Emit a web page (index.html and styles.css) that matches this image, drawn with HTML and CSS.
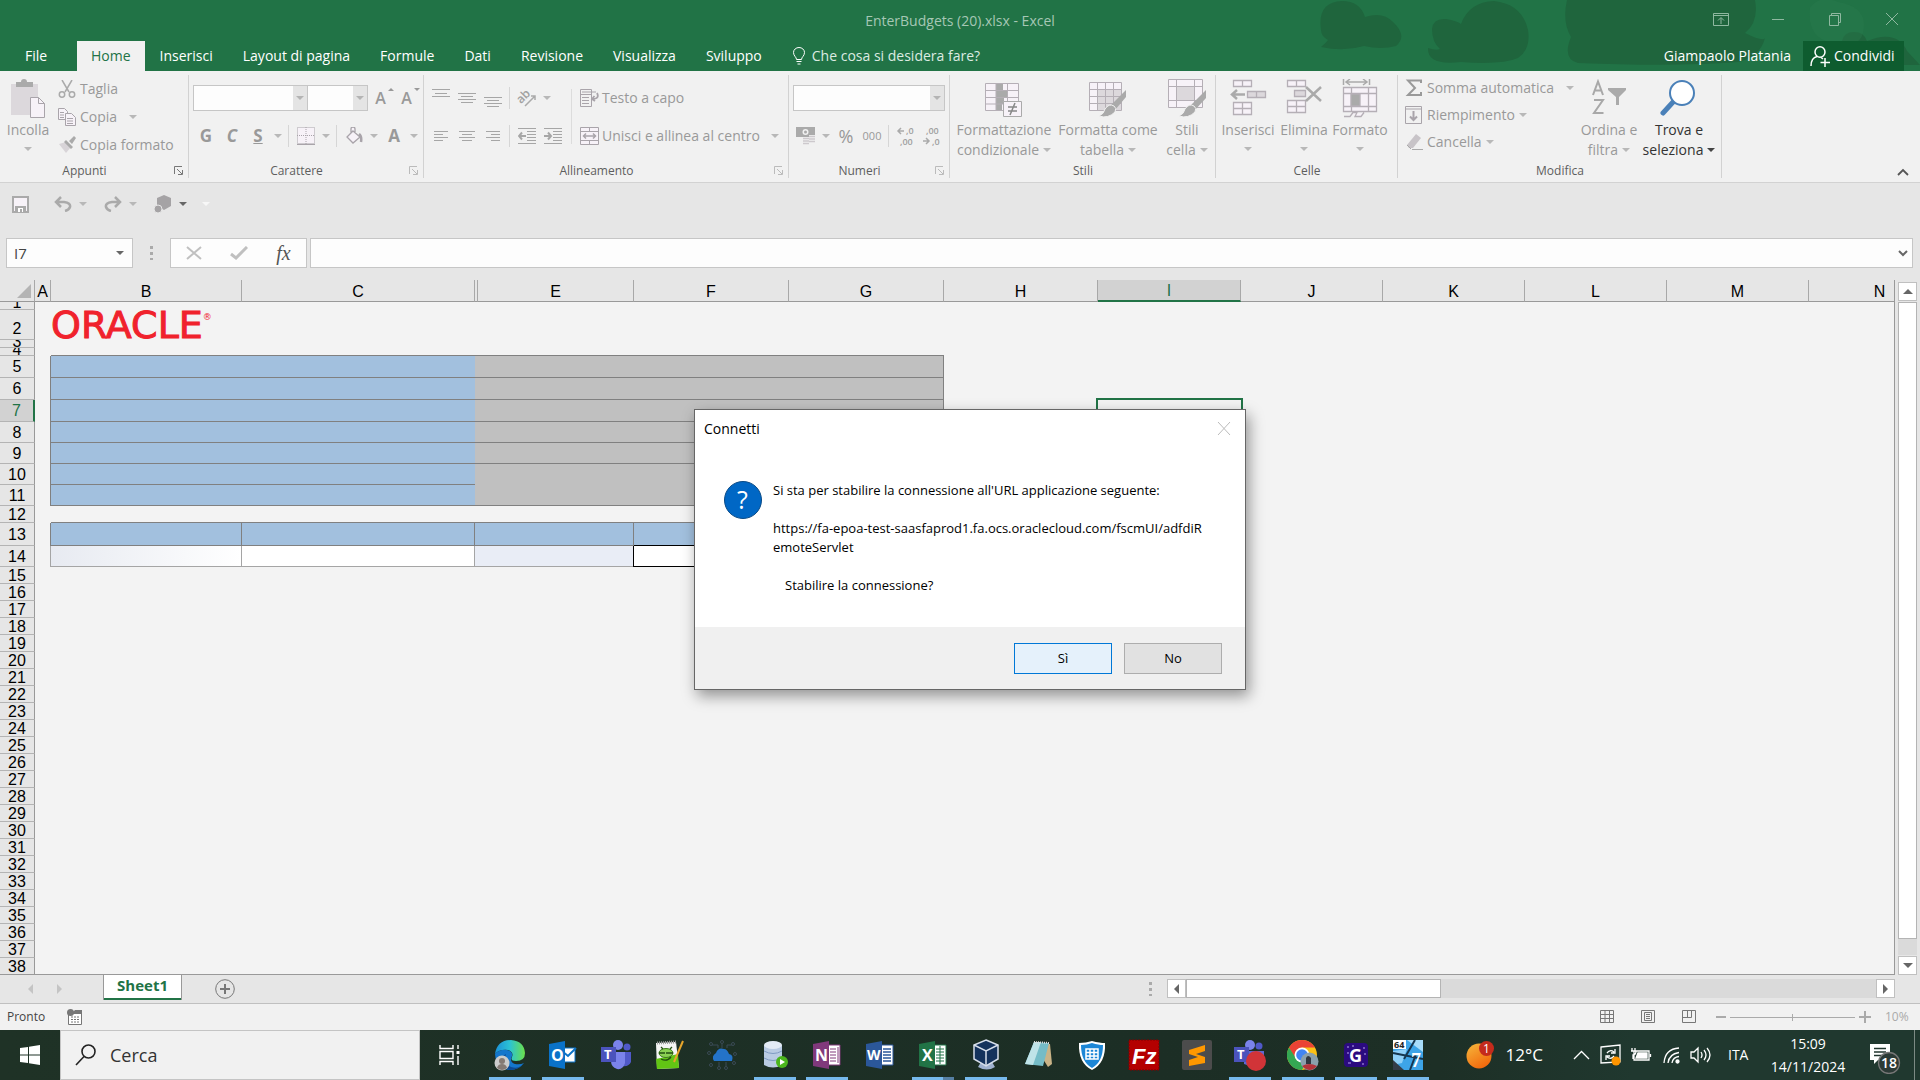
FILE: index.html
```html
<!DOCTYPE html>
<html lang="it">
<head>
<meta charset="utf-8">
<title>EnterBudgets (20).xlsx - Excel</title>
<link rel="stylesheet" href="styles.css">
</head>
<body>
<header class="top">
  <svg class="clouds" width="640" height="65" viewBox="0 0 640 65" aria-hidden="true"><path d="M41 30q-4-28 21-29 18 0 23 16 18-6 28 5 15 14 3 24-15 4-32 0-20 6-43 1 5-4 7-7-7-4-7-10ZM152 29q1-11 14-10 11 2 15 5 8-22 33-23 28 3 34 29 3 19-10 28-16 7-57 4-34 4-33-14 8 3 12 1-8-7-8-20ZM287 0h188q4 22-10 33 18 9 20 5-5 19-27 24-63 5-160 1-16-4-7-26-9-15-4-37ZM562 41q2-9 12-9t13 9q30-12 40 10l13 14h-89q13-12 11-24Z" fill="#1f653d"/><path d="M530 8q10-14 28-6 25 4 26 22 0 24-23 20-35-2-31-36Z" fill="#2a7b4e" opacity=".4"/></svg>
  <div class="titlebar">
    <h1>EnterBudgets (20).xlsx - Excel</h1>
    <div class="winbtns">
      <button aria-label="Opzioni barra multifunzione"><svg width="16" height="14" viewBox="0 0 16 14"><path d="M.5 1.500h15v12H.5zM.5 3.500h15M8 12V6M5 8.500l3-3 3 3"/></svg></button>
      <button aria-label="Riduci a icona"><svg width="16" height="14" viewBox="0 0 16 14"><path d="M2 7.500h12"/></svg></button>
      <button aria-label="Ripristina"><svg width="16" height="14" viewBox="0 0 16 14"><path d="M2.500 3.500h9v10h-9zM4.500 3V1.500h9v9H12"/></svg></button>
      <button aria-label="Chiudi"><svg width="16" height="14" viewBox="0 0 16 14"><path d="M2 1l12 12M14 1 2 13"/></svg></button>
    </div>
  </div>
  <nav class="tabs">
    <a class="file" href="#">File</a><a class="active" href="#">Home</a><a href="#">Inserisci</a><a href="#">Layout di pagina</a><a href="#">Formule</a><a href="#">Dati</a><a href="#">Revisione</a><a href="#">Visualizza</a><a href="#">Sviluppo</a>
    <a class="tell" href="#"><svg width="14" height="18" viewBox="0 0 14 18" fill="none" stroke="#fff"><path d="M4.500 12.500C4.500 10 1.500 9 1.500 5.500a5.500 5 0 0 1 11 0C12.500 9 9.500 10 9.500 12.500zM4.500 14.500h5M5.500 17h3"/></svg>Che cosa si desidera fare?</a>
    <span class="user">Giampaolo Platania</span>
    <button class="share"><svg width="20" height="21" viewBox="0 0 20 21" fill="none" stroke="#fff" stroke-width="1.500"><ellipse cx="10" cy="6" rx="5" ry="5.200"/><path d="M1 20q0-8 6-9.500M11 11.500l2 1.500M15 12v9M10.500 16.500H20"/></svg>Condividi</button>
  </nav>
</header>

<section class="ribbon">
  <div class="group g-clip">
    <div class="body">
      <button class="big"><svg width="36" height="40" viewBox="0 0 36 40"><path d="M1 5h27v31H1z" fill="#dcd8dc"/><path d="M6 3h5q0-3 3-3t3 3h6v5H6z" fill="#aaa"/><path d="M20.500 18.500h8l6 6v14h-14z" fill="#f7f2f8" stroke="#a9a4aa"/><path d="M28.500 18.500v6h6" fill="none" stroke="#a9a4aa"/></svg><span>Incolla</span><i class="dd"></i></button>
      <div class="stack r28">
        <button><svg width="18" height="18" viewBox="0 0 18 18" fill="none" stroke="#aaa" stroke-width="1.500"><path d="M4 0l7 12M14 0 7 12"/><circle cx="4" cy="14.500" r="2.700"/><circle cx="14" cy="14.500" r="2.700"/></svg>Taglia</button>
        <button><svg width="18" height="18" viewBox="0 0 18 18" fill="#f7f2f8" stroke="#a9a4aa"><path d="M.5.500h6l3 3v8h-9zM2 4.500h4M2 7h4M2 9.500h4"/><path d="M7.500 5.500h6l4 4v8h-10zM9 10.500h6M9 13h6M9 15.500h6"/></svg>Copia<i class="dd gap"></i></button>
        <button><svg width="18" height="18" viewBox="0 0 18 18"><path d="M1 8l7-2 5 5-5 6z" fill="#d8d4d8"/><path d="M8 4l7 7-2 2-7-7zM11 5l5-5 2 2-4 6z" fill="#aaa"/></svg>Copia formato</button>
      </div>
    </div>
    <footer>Appunti<svg class="launch on" viewBox="0 0 9 9"><path d="M.5 8V.500H8M3 3l5 5M8.500 4v4.500H4"/></svg></footer>
  </div>

  <div class="group g-font">
    <div class="body rows">
      <div class="row">
        <span class="combo c-font"><select aria-label="Tipo di carattere"><option></option></select></span><span class="combo c-size"><select aria-label="Dimensione"><option></option></select></span>
        <button class="i26 grow" aria-label="Aumenta dimensione">A<i class="mk up"></i></button>
        <button class="i26 grow" aria-label="Riduci dimensione">A<i class="mk down"></i></button>
      </div>
      <div class="row">
        <button class="i26 fmt b">G</button><button class="i26 fmt b it">C</button><button class="i26 fmt b un">S</button><button class="a14"><i class="dd"></i></button><i class="sep"></i>
        <button class="i26"><svg width="18" height="18" viewBox="0 0 18 18" fill="#f7f2f8" stroke="#a9a4aa"><path stroke-dasharray="1 1" d="M.5.500h17v16H.5zM9 0v17M0 8.500h18"/><path d="M0 17.500h18"/></svg></button><button class="a14"><i class="dd"></i></button><i class="sep"></i>
        <button class="i26"><svg width="18" height="18" viewBox="0 0 18 18" fill="#f7f2f8" stroke="#a9a4aa" stroke-width="1.300"><path d="M8 4l7 6-7 6-6-6zM6 7V2q0-2 2-2t2 2v4"/><path d="M14 7q3 2 2 8" stroke-width="2.500" fill="none"/></svg></button><button class="a14"><i class="dd"></i></button>
        <button class="i26 fmt b">A</button><button class="a14"><i class="dd"></i></button>
      </div>
    </div>
    <footer>Carattere<svg class="launch" viewBox="0 0 9 9"><path d="M.5 8V.500H8M3 3l5 5M8.500 4v4.500H4"/></svg></footer>
  </div>

  <div class="group g-align">
    <div class="body">
      <div class="rows pad">
        <div class="row">
          <button class="i26"><svg class="ln" viewBox="0 0 18 18"><path d="M0 .5h18M3 4.500h12M0 7.500h18"/></svg></button><button class="i26"><svg class="ln" viewBox="0 0 18 18"><path d="M0 4.500h18M3 7.500h12M0 10.500h18M3 13.500h12"/></svg></button><button class="i26"><svg class="ln" viewBox="0 0 18 18"><path d="M0 8.500h18M3 11.500h12M0 14.500h18M3 17.500h12"/></svg></button><i class="sep"></i>
          <button class="i26"><svg class="over" width="20" height="18" viewBox="0 0 20 18"><text x="0" y="12" class="t13" transform="rotate(-45 6 9)">ab</text><path d="M8 17L18 7M14 7h4v4" fill="none" stroke="#aaa" stroke-width="1.500"/></svg></button><button class="a14"><i class="dd"></i></button>
        </div>
        <div class="row">
          <button class="i26"><svg class="ln" viewBox="0 0 18 18"><path d="M2 4.500h14M2 7.500h9M2 10.500h14M2 13.500h9"/></svg></button><button class="i26"><svg class="ln" viewBox="0 0 18 18"><path d="M1 4.500h16M4 7.500h10M1 10.500h16M4 13.500h10"/></svg></button><button class="i26"><svg class="ln" viewBox="0 0 18 18"><path d="M2 4.500h14M7 7.500h9M2 10.500h14M7 13.500h9"/></svg></button><i class="sep"></i>
          <button class="i26"><svg class="ln" viewBox="0 0 18 18"><path d="M0 1.500h18M9 4.500h9M9 7.500h9M9 10.500h9M9 13.500h9M0 16.500h18"/><path d="M8 9H1M4 5.500L1 9l3 3.500" stroke-width="2"/></svg></button><button class="i26"><svg class="ln" viewBox="0 0 18 18"><path d="M0 1.500h18M9 4.500h9M9 7.500h9M9 10.500h9M9 13.500h9M0 16.500h18"/><path d="M0 9h7M4 5.500L7 9l-3 3.500" stroke-width="2"/></svg></button>
        </div>
      </div>
      <div class="rows wrapcol">
        <div class="row"><button class="lab"><svg width="19" height="18" viewBox="0 0 19 18" fill="none" stroke="#a9a4aa"><path d="M.5.500h11v17H.5zM0 5.500h12M2 3h14M2 8.500h7M2 11.500h7M2 14.500h7" /><path d="M17 4q3 6-5 6M14.500 7L12 10l3 2" stroke-width="1.800"/></svg>Testo a capo</button></div>
        <div class="row"><button class="lab"><svg width="19" height="18" viewBox="0 0 19 18" fill="#f7f2f8" stroke="#a9a4aa"><path d="M.5.500h18v17H.5zM0 4.500h19M0 13.500h19M9.500 0v4.500M9.500 13.500V18"/><path d="M3 9h13M6 6.500L3.500 9 6 11.500M13 6.500L15.500 9 13 11.500" fill="none" stroke-width="1.500"/></svg>Unisci e allinea al centro<i class="dd gap"></i></button></div>
      </div>
    </div>
    <footer>Allineamento<svg class="launch" viewBox="0 0 9 9"><path d="M.5 8V.500H8M3 3l5 5M8.500 4v4.500H4"/></svg></footer>
  </div>

  <div class="group g-num">
    <div class="body rows">
      <div class="row"><span class="combo c-num"><select aria-label="Formato numero"><option></option></select></span></div>
      <div class="row">
        <button class="i26"><svg width="20" height="19" viewBox="0 0 20 19"><path d="M0 0h19v10H0z" fill="#aaa"/><circle cx="9.500" cy="5" r="3" fill="#f1f1f1"/><circle cx="9.500" cy="5" r="1.500" fill="#aaa"/><path d="M7 10h6v9H7zM13 8h6v9h-6z" fill="#f1f1f1"/><path d="M7 11.500h6M7 14h6M7 16.500h6M13 9.500h6M13 12h6M13 14.500h6" stroke="#cdc9cd" stroke-width="1.500"/></svg></button><button class="a14"><i class="dd"></i></button>
        <button class="i26 pct">%</button><button class="i26 zero">000</button><i class="sep"></i>
        <button class="i26"><svg class="over" width="18" height="20" viewBox="0 0 18 20"><text x="9" y="8" class="t10">,0</text><text x="3" y="19" class="t10">,00</text><path d="M7 5H1M4 2L1 5l3 3" fill="none" stroke="#aaa" stroke-width="1.500"/></svg></button>
        <button class="i26"><svg class="over" width="18" height="20" viewBox="0 0 18 20"><text x="3" y="8" class="t10">,00</text><text x="9" y="19" class="t10">,0</text><path d="M0 15h6M3 12l3 3-3 3" fill="none" stroke="#aaa" stroke-width="1.500"/></svg></button>
      </div>
    </div>
    <footer>Numeri<svg class="launch" viewBox="0 0 9 9"><path d="M.5 8V.500H8M3 3l5 5M8.500 4v4.500H4"/></svg></footer>
  </div>

  <div class="group g-style">
    <div class="body">
      <button class="big"><svg width="38" height="40" viewBox="0 0 38 40"><path d="M.5 4.500h33v27H.5z" fill="#f7f2f8"/><path d="M11 4h7v7h-7zM11 11h12v7H11zM11 18h8v7h-8zM11 25h6v7h-6z" fill="#aaa"/><path d="M.5 4.500h33v27H.5zM11 4v28M22.500 4v28M0 11.500h34M0 18.500h34M0 25h34" fill="none" stroke="#b5afb6"/><path d="M18.500 22.500h18v15h-18z" fill="#f7f2f8" stroke="#aaa"/><path d="M23 28h9M23 32h9M30 24l-5 12" stroke="#888" stroke-width="1.500"/></svg><span>Formattazione<br>condizionale<i class="dd in"></i></span></button>
      <button class="big"><svg width="38" height="40" viewBox="0 0 38 40"><path d="M.5 3.500h32v28H.5z" fill="#f7f2f8"/><path d="M8 10h25v21H8z" fill="#dcd8dc"/><path d="M.5 3.500h32v28H.5zM8.500 3v28M16.500 3v28M24.500 3v28M0 10.500h33M0 17.500h33M0 24.500h33" fill="none" stroke="#b5afb6"/><path d="M37 11v7L26 31l-5-4z" fill="#aaa"/><path d="M25 27q3 2 1 6-7 7-16 4 5-2 6-7 4-6 9-3z" fill="#aaa" stroke="#f1f1f1"/></svg><span>Formatta come<br>tabella<i class="dd in"></i></span></button>
      <button class="big"><svg width="38" height="40" viewBox="0 0 38 40"><path d="M.5.500h34v28H.5z" fill="#f7f2f8"/><path d="M8 7h18v15H8z" fill="#dcd8dc"/><path d="M.5.500h34v28H.5zM8.500 0v28M26.500 0v28M0 7.500h35M0 21.500h35" fill="none" stroke="#b5afb6"/><path d="M38 11v8L27 31l-5-4z" fill="#aaa"/><path d="M26 27q3 2 1 6-7 7-16 4 5-2 6-7 4-6 9-3z" fill="#aaa" stroke="#f1f1f1"/></svg><span>Stili<br>cella<i class="dd in"></i></span></button>
    </div>
    <footer>Stili</footer>
  </div>

  <div class="group g-cell">
    <div class="body">
      <button class="big"><svg width="38" height="40" viewBox="0 0 38 40" fill="#f7f2f8" stroke="#b5afb6" stroke-width="1.300"><path d="M4.500 1.500h18v6h-18zM13.500 1v7M4.500 23.500h18v12h-18zM13.500 23v13M4 29.500h19"/><path d="M18.500 12.500h18v6h-18zM27.500 12v7" fill="#dcd8dc"/><path d="M16 15.500H3M8 11l-5 4.500L8 20" fill="none" stroke="#aaa" stroke-width="2.500"/></svg><span>Inserisci</span><i class="dd"></i></button>
      <button class="big"><svg width="38" height="40" viewBox="0 0 38 40" fill="#f7f2f8" stroke="#b5afb6" stroke-width="1.300"><path d="M2.500 1.500h18v6h-18zM11.500 1v7M2.500 21.500h18v12h-18zM11.500 21v13M2 27.500h19"/><path d="M9.500 11.500h11v6h-11z" fill="#dcd8dc"/><path d="M21 8l15 14M36 8L21 22" fill="none" stroke="#aaa" stroke-width="2.500"/></svg><span>Elimina</span><i class="dd"></i></button>
      <button class="big"><svg width="38" height="40" viewBox="0 0 38 40" fill="#f7f2f8" stroke="#b5afb6" stroke-width="1.300"><path d="M2.500 8.500h33v24h-33zM10.500 8v24M27.500 8v24M2 14.500h33M2 27.500h33M3 37.500h6l3-4h4l-2 4h6l3-4"/><path d="M10 15h9v12h-9z" fill="#aaa"/><path d="M2.500 0v6M28.500 0v6M5 3h21M9 0L5 3l4 3M22 0l4 3-4 3" fill="none" stroke="#aaa" stroke-width="1.500"/></svg><span>Formato</span><i class="dd"></i></button>
    </div>
    <footer>Celle</footer>
  </div>

  <div class="group g-edit">
    <div class="body">
      <div class="stack r27">
        <button><svg width="18" height="18" viewBox="0 0 18 18"><path d="M16 4V1.500H3L10 9l-7 7h13V13" fill="none" stroke="#999" stroke-width="2"/></svg>Somma automatica<i class="dd gap"></i></button>
        <button><svg width="18" height="18" viewBox="0 0 18 18" fill="none" stroke="#a9a4aa"><path d="M.5.500h16v17H.5zM0 3h17" /><path d="M8.500 5v9M5 10.500l3.500 3.500 3.500-3.500" stroke-width="2"/></svg>Riempimento<i class="dd"></i></button>
        <button><svg width="18" height="18" viewBox="0 0 18 18"><path d="M2 12L11 1l5 4-8 10H4z" fill="#c8c4c8"/><path d="M2 12l4 4M7 16.500h11" stroke="#aaa"/></svg>Cancella<i class="dd"></i></button>
      </div>
      <button class="big"><svg width="38" height="40" viewBox="0 0 38 40"><g fill="none" stroke="#a8a8a8" stroke-width="2"><path d="M3 16L8 2.500 13 16M5 11.500h6M4 21h9L4 34h9.500"/></g><path d="M18 9h18v2l-7 7v8h-3v-8l-8-7z" fill="#aaa"/></svg><span>Ordina e<br>filtra<i class="dd in"></i></span></button>
      <button class="big dark"><svg width="38" height="40" viewBox="0 0 38 40"><path d="M14 22L3 34" stroke="#4a80b8" stroke-width="5" stroke-linecap="round"/><circle cx="22" cy="14" r="12" fill="#fff" stroke="#4a80b8" stroke-width="2"/></svg><span>Trova e<br>seleziona<i class="dd in"></i></span></button>
    </div>
    <footer>Modifica</footer>
  </div>
  <button class="collapse" aria-label="Comprimi"><svg width="12" height="8" viewBox="0 0 12 8"><path d="M1 7l5-5 5 5" fill="none" stroke="#555" stroke-width="1.800"/></svg></button>
</section>

<section class="quick">
  <button class="q40"><svg width="17" height="17" viewBox="0 0 17 17"><path d="M1 1h15v15H1z" fill="#f7f2f8" stroke="#aaa" stroke-width="2"/><path d="M3 10h11v6H3z" fill="#aaa"/><path d="M6 12h5v4H6z" fill="#fff"/><path d="M8 13h2v3H8z" fill="#aaa"/></svg></button>
  <button class="q40 end"><svg width="18" height="16" viewBox="0 0 18 16" fill="none" stroke="#aaa" stroke-width="2.500"><path d="M7 1L2 6l5 5M2 6h8q7 1 6 5-1 3-5 4"/></svg></button><button class="a14"><i class="dd"></i></button>
  <button class="q40 next"><svg width="18" height="16" viewBox="0 0 18 16" fill="none" stroke="#aaa" stroke-width="2.500"><path d="M11 1l5 5-5 5M16 6H8Q1 7 2 11q1 3 5 4"/></svg></button><button class="a14"><i class="dd"></i></button>
  <button class="q40 next"><svg width="18" height="18" viewBox="0 0 18 18" fill="#a5a3a5"><path d="M10 0l7 3v8l-7 4-7-4V3z"/><circle cx="4" cy="14" r="4" stroke="#e6e6e6"/></svg></button><button class="a14"><i class="dd blk"></i></button><i class="dd faint"></i>
</section>

<section class="formula">
  <div class="namebox"><input value="I7" aria-label="Casella nome"><button aria-label="Apri elenco nomi"><i class="dd blk"></i></button></div>
  <i class="dots"></i>
  <div class="fxbox">
    <button aria-label="Annulla"><svg width="16" height="14" viewBox="0 0 16 14"><path d="M1 1l14 12M15 1L1 13" stroke="#c0c0c0" stroke-width="2"/></svg></button>
    <button aria-label="Invio"><svg width="18" height="14" viewBox="0 0 18 14"><path d="M1 8l5 4L17 1" fill="none" stroke="#c0c0c0" stroke-width="3"/></svg></button>
    <button class="fx" aria-label="Inserisci funzione">fx</button>
  </div>
  <div class="fbar"><input aria-label="Barra della formula"><button aria-label="Espandi"><svg width="10" height="7" viewBox="0 0 10 7"><path d="M1 1l4 4 4-4" fill="none" stroke="#666" stroke-width="2"/></svg></button></div>
</section>

<main class="work">
  <div class="sheet">
    <table>
      <colgroup><col class="w35"><col class="w16"><col class="w191"><col class="w233"><col class="w3"><col class="w156"><col class="w155"><col class="w155"><col class="w154"><col class="w143"><col class="w142"><col class="w142"><col class="w142"><col class="w142"><col class="w142"></colgroup>
      <thead><tr><th class="corner"><svg width="14" height="14" viewBox="0 0 14 14"><path d="M14 0v14H0z" fill="#b4b4b4"/></svg></th><th>A</th><th>B</th><th>C</th><th></th><th>E</th><th>F</th><th>G</th><th>H</th><th class="sel">I</th><th>J</th><th>K</th><th>L</th><th>M</th><th>N</th></tr></thead>
      <tbody>
        <tr class="h8"><th><div>1</div></th><td colspan="14"></td></tr>
        <tr class="h30"><th><div>2</div></th><td></td><td colspan="13"><div class="oracle">ORACLE<sup>®</sup></div></td></tr>
        <tr class="h8 cut"><th><div>3</div></th><td colspan="14"></td></tr>
        <tr class="h8 cut edge"><th><div>4</div></th><td class="last"></td><td colspan="6" class="bb"></td><td colspan="7"></td></tr>
        <tr class="h22"><th><div>5</div></th><td class="br"></td><td colspan="2" class="blue"></td><td colspan="4" class="gray"></td><td colspan="7"></td></tr>
        <tr class="h22"><th><div>6</div></th><td class="br"></td><td colspan="2" class="blue"></td><td colspan="4" class="gray"></td><td colspan="7"></td></tr>
        <tr class="h22"><th class="sel"><div>7</div></th><td class="br"></td><td colspan="2" class="blue"></td><td colspan="4" class="gray"></td><td></td><td class="cursor"></td><td colspan="5"></td></tr>
        <tr class="h21"><th><div>8</div></th><td class="br"></td><td colspan="2" class="blue"></td><td colspan="4" class="gray"></td><td colspan="7"></td></tr>
        <tr class="h21"><th><div>9</div></th><td class="br"></td><td colspan="2" class="blue"></td><td colspan="4" class="gray"></td><td colspan="7"></td></tr>
        <tr class="h21"><th><div>10</div></th><td class="br"></td><td colspan="2" class="blue"></td><td colspan="4" class="gray" rowspan="2"></td><td colspan="7"></td></tr>
        <tr class="h21"><th><div>11</div></th><td class="br"></td><td colspan="2" class="blue"></td><td colspan="7"></td></tr>
        <tr class="h17"><th><div>12</div></th><td></td><td colspan="6" class="bb"></td><td colspan="7"></td></tr>
        <tr class="h23"><th><div>13</div></th><td class="br"></td><td class="blue br"></td><td class="blue br"></td><td colspan="2" class="blue br"></td><td class="blue br bk"></td><td class="blue br"></td><td colspan="7"></td></tr>
        <tr class="h21 entry"><th><div>14</div></th><td class="br"></td><td class="fade"></td><td class="white"></td><td colspan="2" class="pale"></td><td class="active"></td><td class="white"></td><td colspan="7"></td></tr>
        <tr><th><div>15</div></th><td colspan="14"></td></tr>
        <tr><th><div>16</div></th><td colspan="14"></td></tr>
        <tr><th><div>17</div></th><td colspan="14"></td></tr>
        <tr><th><div>18</div></th><td colspan="14"></td></tr>
        <tr><th><div>19</div></th><td colspan="14"></td></tr>
        <tr><th><div>20</div></th><td colspan="14"></td></tr>
        <tr><th><div>21</div></th><td colspan="14"></td></tr>
        <tr><th><div>22</div></th><td colspan="14"></td></tr>
        <tr><th><div>23</div></th><td colspan="14"></td></tr>
        <tr><th><div>24</div></th><td colspan="14"></td></tr>
        <tr><th><div>25</div></th><td colspan="14"></td></tr>
        <tr><th><div>26</div></th><td colspan="14"></td></tr>
        <tr><th><div>27</div></th><td colspan="14"></td></tr>
        <tr><th><div>28</div></th><td colspan="14"></td></tr>
        <tr><th><div>29</div></th><td colspan="14"></td></tr>
        <tr><th><div>30</div></th><td colspan="14"></td></tr>
        <tr><th><div>31</div></th><td colspan="14"></td></tr>
        <tr><th><div>32</div></th><td colspan="14"></td></tr>
        <tr><th><div>33</div></th><td colspan="14"></td></tr>
        <tr><th><div>34</div></th><td colspan="14"></td></tr>
        <tr><th><div>35</div></th><td colspan="14"></td></tr>
        <tr><th><div>36</div></th><td colspan="14"></td></tr>
        <tr><th><div>37</div></th><td colspan="14"></td></tr>
        <tr><th><div>38</div></th><td colspan="14"></td></tr>
      </tbody>
    </table>
  </div>
  <div class="vscroll"><button aria-label="Su"><i class="tri up"></i></button><div class="track"><div class="thumb"></div></div><button aria-label="Giù"><i class="tri down"></i></button></div>
</main>

<section class="sheetbar">
  <button class="nav" aria-label="Precedente"><i class="tri left dim"></i></button><button class="nav" aria-label="Successivo"><i class="tri right dim"></i></button>
  <a class="stab" href="#">Sheet1</a>
  <button class="add" aria-label="Nuovo foglio"><svg width="20" height="20" viewBox="0 0 20 20" fill="none" stroke="#777"><circle cx="10" cy="10" r="9.300"/><path d="M10 5v10M5 10h10" stroke-width="2"/></svg></button>
  <i class="dots"></i>
  <div class="hscroll"><button aria-label="Sinistra"><i class="tri left"></i></button><div class="track"><div class="thumb"></div></div><button aria-label="Destra"><i class="tri right"></i></button></div>
</section>

<section class="status">
  <span>Pronto</span>
  <svg width="16" height="16" viewBox="0 0 16 16"><path d="M1.500 3.500h13v12h-13z" fill="#fff" stroke="#777"/><path d="M8 1h7v4H4z" fill="#777"/><path d="M4 8h9M4 10.500h9M4 13h9" stroke="#777" stroke-dasharray="2 1"/><circle cx="3.500" cy="3.500" r="3.500" fill="#777"/></svg>
  <div class="views">
    <button aria-label="Normale"><svg width="14" height="14" viewBox="0 0 14 14"><path d="M.5.500h13v12H.5zM5 0v13M9.500 0v13M0 4.500h14M0 8.500h14"/></svg></button>
    <button aria-label="Layout di pagina"><svg width="14" height="14" viewBox="0 0 14 14"><path d="M.5.500h13v12H.5zM3.500 2.500h7v8h-7zM5 4.500h4M5 6.500h4M5 8.500h4"/></svg></button>
    <button aria-label="Anteprima interruzioni"><svg width="14" height="14" viewBox="0 0 14 14"><path d="M.5.500h13v12H.5zM5.500 0v7.500M9.500 0v7.500M0 7.500h9.500"/></svg></button>
  </div>
  <div class="zoom"><button aria-label="Riduci"><svg width="10" height="12" viewBox="0 0 10 12"><path d="M0 6h10" stroke="#aaa" stroke-width="2"/></svg></button><input type="range" aria-label="Zoom"><button aria-label="Ingrandisci"><svg width="12" height="12" viewBox="0 0 12 12"><path d="M0 6h12M6 0v12" stroke="#aaa" stroke-width="2"/></svg></button><span>10%</span></div>
</section>

<footer class="taskbar">
  <button class="start" aria-label="Start"><svg width="20" height="20" viewBox="0 0 20 20" fill="#fff"><path d="M0 3l8-1v7.500H0zM9 1.800L20 0v9.500H9zM0 10.500h8V18l-8-1zM9 10.500h11V20L9 18.200z"/></svg></button>
  <label class="search"><svg width="22" height="22" viewBox="0 0 22 22" fill="none" stroke="#222" stroke-width="1.600"><circle cx="13.500" cy="7.500" r="6.500"/><path d="M9 12.500L1 21"/></svg><input placeholder="Cerca" aria-label="Cerca"></label>
  <button class="tview" aria-label="Visualizzazione attività"><svg width="22" height="20" viewBox="0 0 22 20" fill="none" stroke="#fff" stroke-width="1.400"><path d="M1 0v3.500h13V0M1 6.500h13v7H1zM1 20v-3.500h13V20M19 0v4M19 11v9"/><path d="M17.500 6h3v3h-3z" fill="#fff" stroke="none"/></svg></button>
  <div class="apps">
    <button class="run" aria-label="Edge"><svg width="32" height="32" viewBox="0 0 32 32"><defs><linearGradient id="eg"><stop stop-color="#1a8fd8"/><stop offset=".5" stop-color="#2cc3d2"/><stop offset="1" stop-color="#6be04a"/></linearGradient></defs><path d="M1 15Q3 1 17 1q13 1 14 13 0 8-9 8-6 0-4-4 2-5-4-7-8-1-13 4z" fill="url(#eg)"/><path d="M1 15q5-5 12-4 6 1 5 6-3 6 3 8 5 1 9-1-5 7-14 7Q2 30 1 15z" fill="#1476cc"/><path d="M12 15q-3 9 5 13 6 2 10-1l3-3q-5 7-14 7-9-2-9-9 1-5 5-7z" fill="#0d4a94"/><circle cx="8" cy="24" r="7.500" fill="#ccc"/><circle cx="8" cy="22" r="3" fill="#857a74"/><path d="M3 29q1-4 5-4t5 4q-5 4-10 0z" fill="#857a74"/></svg></button>
    <button class="run" aria-label="Outlook"><svg width="32" height="32" viewBox="0 0 32 32"><path d="M15 9h13v14H15z" fill="#fff" stroke="#0a72c8"/><path d="M15 12l6 5 8-8" fill="none" stroke="#0a72c8" stroke-width="2"/><path d="M2 5l16-3v28L2 27z" fill="#0a72c8"/><text x="4" y="22" class="w16t">O</text></svg></button>
    <button aria-label="Teams"><svg width="32" height="32" viewBox="0 0 32 32"><circle cx="18" cy="6" r="5" fill="#7b83eb"/><circle cx="27" cy="8" r="3.500" fill="#5059c9"/><path d="M22 13h9v10q-2 5-9 4z" fill="#5059c9"/><path d="M11 13h14v11q-2 7-8 6-6-2-6-8z" fill="#7b83eb"/><path d="M1 8h15v15H1z" fill="#4b53bc"/><text x="4" y="20" class="w12t">T</text></svg></button>
    <button aria-label="Notepad++"><svg width="32" height="32" viewBox="0 0 32 32"><path d="M3 4l20-1 3 26-22 1z" fill="#f5f5f5"/><path d="M3 20l22-5 1 14-22 1z" fill="#62c514"/><path d="M4 4l19-1" stroke="#999" stroke-width="3" stroke-dasharray="1 1"/><ellipse cx="13" cy="14" rx="7" ry="4.500" fill="#8ad053" stroke="#3d7a1c"/><path d="M6 14h6M13 14h7M8 20q6 3 10-2M10 10l-2-2M17 10l2-2" fill="none" stroke="#234d12" stroke-width="1.300"/><path d="M30 2L21 23" stroke="#e6a52b" stroke-width="2"/></svg></button>
    <button aria-label="Cloud"><svg width="32" height="32" viewBox="0 0 32 32"><g fill="none" stroke="#3a4a55"><circle cx="5" cy="5" r="1.500"/><circle cx="16" cy="3" r="1.500"/><circle cx="27" cy="5" r="1.500"/><circle cx="3" cy="14" r="1.500"/><circle cx="29" cy="15" r="1.500"/><circle cx="5" cy="26" r="1.500"/><circle cx="13" cy="29" r="1.500"/><circle cx="20" cy="29" r="1.500"/><circle cx="28" cy="24" r="1.500"/><path d="M6 6h6v3M16 5v4M26 6h-5v3M13 23v4M20 23v4"/></g><path d="M8 22q-3-5 2-8 2-6 8-4 3 0 5 5 5 1 3 7z" fill="#2473c8"/></svg></button>
    <button class="run" aria-label="SQL Developer"><svg width="32" height="32" viewBox="0 0 32 32"><path d="M5 6v20q9 5 18 0V6z" fill="#b9cbe3"/><ellipse cx="14" cy="6" rx="9" ry="4" fill="#e3ebf5"/><path d="M5 12q9 5 18 0M5 19q9 5 18 0" fill="none" stroke="#7f9bc2"/><circle cx="23" cy="23" r="6" fill="#4bb51d"/><path d="M21 20l5 3-5 3z" fill="#fff"/></svg></button>
    <button class="run" aria-label="OneNote"><svg width="32" height="32" viewBox="0 0 32 32"><path d="M16 6h13v20H16z" fill="#fff" stroke="#80397b"/><path d="M19 10h6M19 13h6M19 16h6M19 19h6M19 22h6M27 8v16" stroke="#80397b"/><path d="M2 5l16-3v28L2 27z" fill="#80397b"/><text x="4" y="22" class="w16t">N</text></svg></button>
    <button aria-label="Word"><svg width="32" height="32" viewBox="0 0 32 32"><path d="M16 6h13v20H16z" fill="#fff" stroke="#2b579a"/><path d="M19 10h8M19 13h8M19 16h8M19 19h8M19 22h8" stroke="#2b579a" stroke-width="1.500"/><path d="M2 5l16-3v28L2 27z" fill="#2b579a"/><text x="3" y="21" class="w14t">W</text></svg></button>
    <button class="run two" aria-label="Excel"><svg width="32" height="32" viewBox="0 0 32 32"><path d="M16 6h13v20H16z" fill="#fff" stroke="#217346"/><path d="M19 10h8M19 13h8M19 16h8M19 19h8M19 22h8M23 7v18" stroke="#217346"/><path d="M2 5l16-3v28L2 27z" fill="#217346"/><text x="5" y="22" class="w16t">X</text></svg></button>
    <button class="run" aria-label="VirtualBox"><svg width="32" height="32" viewBox="0 0 32 32"><path d="M11 23h11l3 5q-8 5-17 0z" fill="#9fb1cf"/><path d="M16 1l12 5v14l-12 7-12-7V6z" fill="#14325c" stroke="#d6deea" stroke-width="1.500"/><path d="M4 6l12 6 12-6M16 12v15" fill="none" stroke="#d6deea" stroke-width="1.500"/></svg></button>
    <button aria-label="Blocco note"><svg width="32" height="32" viewBox="0 0 32 32"><path d="M10 4l17 1 2 20-4 3z" fill="#c9b387"/><path d="M11 3l15 1-6 23L2 25z" fill="#75bcc7"/><path d="M11 3l7 0-8 23-8-1z" fill="#bfe3e8"/><path d="M11 3l15 1" stroke="#ddd" stroke-width="2" stroke-dasharray="1 1"/></svg></button>
    <button aria-label="FortiClient"><svg width="32" height="32" viewBox="0 0 32 32"><path d="M16 2q8 2 13 2 1 20-13 27Q2 24 3 4q7 0 13-2z" fill="#fff"/><path d="M16 4q7 2 11 2 0 17-11 23Q5 23 5 6q6 0 11-2z" fill="#1c86d6"/><path d="M10 10h12v10H10zM10 13.500h12M10 17h12M14 10v10M18 10v10" fill="none" stroke="#fff" stroke-width="1.500"/></svg></button>
    <button aria-label="FileZilla"><svg width="32" height="32" viewBox="0 0 32 32"><path d="M1 1h30v30H1z" fill="#b40000" stroke="#7c0000" stroke-dasharray="2 1"/><text x="4" y="25" class="fz">Fz</text></svg></button>
    <button aria-label="Sublime Text"><svg width="32" height="32" viewBox="0 0 32 32"><rect x="1" y="1" width="30" height="30" rx="2" fill="#4c4c4c"/><path d="M8 11l16-5v6l-9 3 9 3v6L8 27v-6l9-3-9-3z" fill="#ff9800"/></svg></button>
    <button class="run" aria-label="Teams riunione"><svg width="34" height="34" viewBox="0 0 34 34"><circle cx="17" cy="7" r="5" fill="#7b83eb"/><circle cx="26" cy="8" r="3.500" fill="#5059c9"/><path d="M11 13h20v9l-8 8-12-4z" fill="#5f67d2"/><path d="M1 9h15v15H1z" fill="#4b53bc"/><text x="4" y="21" class="w12t">T</text><circle cx="23" cy="23" r="10" fill="#d13438"/></svg></button>
    <button class="run" aria-label="Chrome"><svg width="32" height="32" viewBox="0 0 32 32"><circle cx="15" cy="16" r="15" fill="#fbc116"/><path d="M2 8.500A15 15 0 0 1 28 8.500H15l-7 11z" fill="#ea4335"/><path d="M2 8.500A15 15 0 0 0 15 31l7-12-12 2z" fill="#34a853"/><circle cx="15" cy="16" r="7.500" fill="#fff"/><circle cx="15" cy="16" r="5.800" fill="#4285f4"/><circle cx="22.500" cy="22.500" r="9" fill="#8aa0ad"/><path d="M19 19q2-4 5 0v6h-5z" fill="#303740"/><path d="M15 27q7-4 15 0-7 8-15 0z" fill="#b4333a"/></svg></button>
    <button class="run" aria-label="Greenshot"><svg width="32" height="32" viewBox="0 0 32 32"><rect x="4" y="4" width="24" height="24" rx="4" fill="#2b0a80"/><path d="M7 8h2M12 7h2M7 14h2M23 9h2M24 15h2M8 24h3M22 25h2" stroke="#b9a4f0" stroke-width="1"/><text x="9" y="23" class="w18t">G</text></svg></button>
    <button class="run" aria-label="Applicazione 64 bit"><svg width="32" height="32" viewBox="0 0 32 32"><path d="M1 1h30v30H1z" fill="#3da4e8"/><path d="M15 1h16v12z" fill="#a8dcfa"/><path d="M1 12l14-2-5 14-9 2z" fill="#8fd0f8"/><path d="M12 20L23 1M1 14l30 6M18 31l6-16" stroke="#17364f" stroke-width="2"/><path d="M1 21l11 10H1z" fill="#343c48"/><path d="M1 1h13v9H1z" fill="#fff"/><text x="2" y="9" class="n64">64</text><text x="19" y="28" class="n7">7</text></svg></button>
  </div>
  <div class="tray">
    <button class="weather"><svg width="28" height="28" viewBox="0 0 28 28"><defs><linearGradient id="sun" x2="0.600" y2="1"><stop stop-color="#f5b83c"/><stop offset="1" stop-color="#f2690d"/></linearGradient></defs><circle cx="13" cy="15" r="12.500" fill="url(#sun)"/><circle cx="20.500" cy="7.500" r="7.500" fill="#c42b1c"/><text x="17" y="12" class="n1">1</text></svg>12°C</button>
    <button class="t30" aria-label="Icone nascoste"><svg width="17" height="10" viewBox="0 0 17 10"><path d="M1 9l7.500-7.500L16 9"/></svg></button>
    <button class="t30" aria-label="Aggiornamenti"><svg width="22" height="22" viewBox="0 0 22 22"><path d="M1 3l19-2v17L1 19zM7 9q3-4 7-1M15 5v4h-4M14 12q-3 4-7 1M6 16v-4h4"/><circle cx="16" cy="17" r="4.500" fill="#ff9500" stroke="none"/></svg></button>
    <button class="t30" aria-label="Batteria"><svg width="22" height="16" viewBox="0 0 22 16"><path d="M4 4h15v9H4zM20.500 7v3M2 1v3M5 1v3M1 4h5q0 4-3 4v4"/><path d="M8 6h9v5H6z" fill="#fff"/></svg></button>
    <button class="t30" aria-label="Wi-Fi"><svg width="18" height="18" viewBox="0 0 18 18"><path d="M2 17Q3 3 17 2M6 17Q7 8 17 6.500M10 17q1-6 7-6.500"/><circle cx="15.500" cy="15.500" r="1.500" fill="#fff"/></svg></button>
    <button class="t30" aria-label="Volume"><svg width="22" height="18" viewBox="0 0 22 18"><path d="M1 6h3l4-4v14l-4-4H1zM11 6q2 3 0 6M14 4q4 5 0 10M17 2q6 7 0 14"/></svg></button>
    <span class="lang">ITA</span>
    <span class="clock">15:09<br>14/11/2024</span>
    <button class="notif" aria-label="Notifiche"><svg width="32" height="32" viewBox="0 0 32 32"><path d="M1 2h20v16H9l-4 4v-4H1z" fill="#fff" stroke="none"/><path d="M5 6.500h12M5 10h12M5 13.500h8" stroke="#20352e" stroke-width="1.500"/><circle cx="20" cy="21" r="10.500" fill="#2c3a36" stroke="#777"/><text x="12" y="26" class="n18">18</text></svg></button>
    <i class="peek"></i>
  </div>
</footer>

<div class="dialog" role="dialog" aria-labelledby="dlg">
  <div class="dtitle"><h2 id="dlg">Connetti</h2><button aria-label="Chiudi"><svg width="14" height="13" viewBox="0 0 14 13"><path d="M1 0l12 13M13 0L1 13" stroke="#bbb"/></svg></button></div>
  <div class="dbody">
    <svg width="38" height="38" viewBox="0 0 38 38"><circle cx="19" cy="19" r="18.500" fill="#0067c5" stroke="#094a86"/><text x="13" y="28" class="qm">?</text></svg>
    <div class="msg"><p>Si sta per stabilire la connessione all'URL applicazione seguente:</p><p>https://fa-epoa-test-saasfaprod1.fa.ocs.oraclecloud.com/fscmUI/adfdiR<br>emoteServlet</p><p class="ind">Stabilire la connessione?</p></div>
  </div>
  <div class="dfoot"><button class="yes">Sì</button><button>No</button></div>
</div>
</body>
</html>
```
FILE: styles.css
```css
* { box-sizing: border-box; }
body { margin: 0; min-height: 100vh; display: flex; flex-direction: column; overflow: hidden; background: #e6e6e6; font: 14px/20px "Open Sans", "Noto Sans", sans-serif; color: #444; }
button, input, select { font: inherit; color: inherit; border: 0; background: none; padding: 0; margin: 0; outline: 0; }
a { color: inherit; text-decoration: none; }
svg { display: block; flex: none; }
svg.over { overflow: visible; }
h1, h2, p { margin: 0; font: inherit; }

/* title and tabs */
.top { position: relative; background: #217346; color: #fff; height: 71px; flex: none; }
.clouds { position: absolute; right: 0; top: 0; }
.titlebar { position: relative; display: flex; justify-content: center; height: 41px; align-items: center; }
.titlebar h1 { color: #a6c7b5; }
.winbtns { position: absolute; right: 0; top: 12px; display: flex; }
.winbtns button { width: 57px; display: flex; justify-content: center; }
.winbtns svg { fill: none; stroke: #8fb8a0; }
.tabs { position: relative; display: flex; height: 30px; padding-right: 16px; align-items: stretch; }
.tabs a { padding: 0 15px; line-height: 30px; }
.tabs .file { width: 77px; padding: 0 0 0 25px; }
.tabs .active { background: #f1f1f1; color: #217346; padding: 0 14px; }
.tabs .tell { display: flex; align-items: center; gap: 6px; color: #dcebe2; }
.user { margin-left: auto; line-height: 30px; padding-right: 12px; }
.share { background: #0e5c2f; display: flex; align-items: center; gap: 4px; padding: 0 8px 0 7px; width: 101px; color: #fff; }

/* ribbon */
.ribbon { display: flex; height: 112px; flex: none; background: #f1f1f1; border-bottom: 1px solid #d2d2d2; color: #999; position: relative; }
.ribbon button { white-space: nowrap; }
.group { display: flex; flex-direction: column; position: relative; padding-top: 4px; flex: none; }
.group::after { content: ""; position: absolute; right: 0; top: 4px; bottom: 4px; width: 1px; background: #d2d2d2; }
.g-clip { width: 189px; } .g-font { width: 235px; } .g-align { width: 365px; } .g-num { width: 161px; } .g-style { width: 266px; } .g-cell { width: 182px; } .g-edit { width: 324px; }
.body { display: flex; height: 88px; }
.group > footer { color: #5e5e5e; font-size: 12px; line-height: 22px; text-align: center; padding-right: 20px; position: relative; }
.g-style > footer, .g-cell > footer, .g-edit > footer { padding-right: 0; }
.launch { position: absolute; right: 6px; top: 6px; width: 9px; height: 9px; fill: none; stroke: #bbb; }
.launch.on { stroke: #777; }
.big { display: flex; flex-direction: column; align-items: center; padding-top: 4px; flex: none; }
.big > span { margin-top: 1px; height: 20px; }
.big > .dd { margin-top: 7px; }
.g-clip .big { width: 56px; }
.g-style .body { padding-left: 2px; }
.g-style .big { width: 104px; } .g-style .big:last-child { width: 54px; }
.g-cell .body { padding-left: 4px; }
.g-cell .big { width: 56px; }
.g-edit .big { width: 70px; }
.dark { color: #333; } .dark .dd { border-top-color: #444; }
.stack { display: flex; flex-direction: column; padding-left: 2px; }
.stack button { display: flex; align-items: center; gap: 4px; }
.r28 button { height: 28px; } .r27 button { height: 27px; }
.g-edit .stack { padding-left: 7px; width: 176px; margin-top: -1px; }
.dd { display: inline-block; flex: none; border: 4px solid transparent; border-top: 4px solid #b8b8b8; border-bottom: 0; }
.dd.gap { margin-left: 8px; } .dd.in { margin-left: 4px; vertical-align: 3px; } .dd.blk { border-top-color: #666; } .dd.faint { border-top-color: #f7f7f7; margin-left: 12px; }
.rows { display: flex; flex-direction: column; padding: 4px 0 0 4px; }
.row { display: flex; height: 38px; align-items: center; }
.i26 { width: 26px; height: 26px; display: flex; align-items: center; justify-content: center; flex: none; }
.a14 { width: 14px; height: 26px; display: flex; align-items: center; justify-content: center; flex: none; }
.sep { width: 1px; height: 22px; background: #d6d6d6; margin: 0 4px 0 3px; }
.fmt { font-size: 17px; } .b { font-weight: 700; } .it { font-style: italic; } .un { text-decoration: underline; }
.grow { font-size: 16px; font-weight: 600; position: relative; padding-right: 5px; }
.mk { position: absolute; right: 2px; top: 3px; border: 3px solid transparent; }
.mk.up { border-bottom-color: #999; border-top: 0; } .mk.down { border-top-color: #999; border-bottom: 0; }
.pct { font-size: 18px; } .zero { font-size: 11px; }
.combo { height: 26px; border: 1px solid #c6c6c6; background: #fdfdfd; display: flex; position: relative; }
.combo::before { content: ""; position: absolute; right: 0; top: 0; bottom: 0; width: 14px; background: #e4e4e4; }
.combo::after { content: ""; position: absolute; right: 3px; top: 10px; border: 4px solid transparent; border-top-color: #b4b4b4; border-bottom: 0; }
.combo select { appearance: none; width: 100%; }
.c-font { width: 115px; } .c-size { width: 60px; border-left: 0; margin-right: 2px; } .c-num { width: 152px; }
.ln { width: 18px; height: 18px; fill: none; stroke: #a6a6a6; }
.g-align .rows.pad { width: 147px; }
.wrapcol { padding-left: 9px; border-left: 0; position: relative; }
.wrapcol::before { content: ""; position: absolute; left: 0; top: 14px; height: 55px; width: 1px; background: #dcdcdc; }
.lab { display: flex; align-items: center; gap: 3px; }
.t10, .t13 { fill: #a0a0a0; } .t10 { font-size: 9px; font-weight: 600; } .t13 { font-size: 12px; font-weight: 600; }
.collapse { position: absolute; right: 11px; bottom: 6px; }

/* quick access and formula bar */
.quick { height: 42px; display: flex; align-items: center; flex: none; }
.q40 { width: 40px; display: flex; justify-content: center; } .q40.end { width: 36px; justify-content: flex-end; margin-right: 4px; margin-left: -4px; } .q40.next { width: 36px; padding-left: 10px; }
.formula { display: flex; padding: 13px 7px 0 6px; height: 55px; align-items: flex-start; flex: none; }
.namebox, .fxbox, .fbar { height: 30px; border: 1px solid #c6c6c6; background: #fdfdfd; display: flex; align-items: center; }
.namebox { width: 127px; padding: 0 8px 0 7px; } .namebox input { flex: 1; min-width: 0; font-size: 15px; }
.namebox button { display: flex; }
.dots { width: 3px; height: 14px; flex: none; background: repeating-linear-gradient(#aaa 0 3px, transparent 3px 6px); }
.formula .dots { margin: 8px 17px; }
.fxbox { width: 137px; margin-right: 3px; } .fxbox button { flex: 1; display: flex; justify-content: center; }
.fx { font: italic 20px/20px "Liberation Serif", serif; color: #555; -webkit-text-stroke: 0; }
.fbar { flex: 1; padding: 0 4px 0 8px; } .fbar input { flex: 1; }

/* worksheet */
.work { flex: 1; display: flex; min-height: 0; gap: 3px; padding-right: 3px; }
.sheet { flex: 1; min-width: 0; overflow: hidden; border-right: 1px solid #999; border-bottom: 1px solid #999; background: #f3f3f3; height: 695px; }
table { border-collapse: separate; border-spacing: 0; table-layout: fixed; width: 1951px; }
.w35 { width: 35px; } .w16 { width: 16px; } .w191 { width: 191px; } .w233 { width: 233px; } .w3 { width: 3px; } .w156 { width: 156px; } .w155 { width: 155px; } .w154 { width: 154px; } .w143 { width: 143px; } .w142 { width: 142px; }
th, td { padding: 0; }
th { font: 16px/17px "Liberation Sans", sans-serif; color: #000; background: #e6e6e6; }
thead th { height: 22px; padding-top: 1px; border-right: 1px solid #a8a8a8; border-bottom: 1px solid #999; }
thead .sel, tbody .sel { background: #d2d2d2; color: #217346; } thead .sel { border-bottom: 2px solid #217346; }
.corner svg { margin-left: 17px; }
tbody th { border-right: 1px solid #999; border-bottom: 1px solid #b4b4b4; }
tbody .sel { border-right: 2px solid #217346; }
tbody th div { height: 16px; line-height: 17px; overflow: hidden; display: flex; align-items: center; justify-content: center; }
.h8 th div { height: 7px; align-items: flex-start; line-height: 2px; } .h8.cut th div { line-height: 4px; }
.h30 th div { height: 29px; padding-top: 8px; } .h22 th div { height: 21px; } .h21 th div { height: 20px; } .h23 th div { height: 22px; }
.oracle { font: 38px/28px "DejaVu Sans", sans-serif; color: #f0222c; height: 28px; -webkit-text-stroke: 1px #f0222c; } .oracle sup { font-size: 9px; line-height: 9px; vertical-align: 18px; -webkit-text-stroke: 0; }
.bb { border-bottom: 1px solid #808080; } .br { border-right: 1px solid #808080; }
.blue { background: #a2c0de; border-bottom: 1px solid #808080; } .gray { background: #c0c0c0; border-bottom: 1px solid #808080; border-right: 1px solid #808080; }
.cursor { outline: 2px solid #217346; }
.entry td { border-bottom: 1px solid #a5a5a5; border-right: 1px solid #a5a5a5; } .entry td:nth-child(2) { border-bottom: 0; } .entry td:last-child { border: 0; }
.fade { background: linear-gradient(90deg, #e7eaf1, #fff); } .white { background: #fff; } .pale { background: #e9edf6; }
.bk { border-bottom-color: #000; } .entry .active { background: #fff; border-color: #000; box-shadow: -1px 0 #000; }

/* scrollbars */
.vscroll { width: 19px; display: flex; flex-direction: column; padding-top: 2px; gap: 1px; height: 695px; }
.vscroll button, .hscroll button { background: #fff; border: 1px solid #c0c0c0; width: 19px; height: 19px; display: flex; align-items: center; justify-content: center; flex: none; }
.track { flex: 1; background: #dadada; } .thumb { background: #fff; border: 1px solid #b4b4b4; }
.vscroll .thumb { height: 97.500%; } .hscroll .thumb { width: 37%; height: 100%; }
.tri { border: 5px solid transparent; } .tri.up { border-bottom-color: #666; border-top: 0; } .tri.down { border-top-color: #666; border-bottom: 0; } .tri.left { border-right-color: #666; border-left: 0; } .tri.right { border-left-color: #666; border-right: 0; }
.tri.left.dim { border-right-color: #c4c4c4; } .tri.right.dim { border-left-color: #c4c4c4; }
.sheetbar { height: 28px; display: flex; align-items: flex-start; padding: 0 25px 0 16px; flex: none; }
.sheetbar .nav { width: 29px; height: 27px; display: flex; align-items: center; justify-content: center; }
.stab { margin-left: 29px; width: 79px; height: 25px; background: #fff; border: solid #999; border-width: 0 1px; box-shadow: inset 0 -2px #217346; color: #217346; font-weight: 700; font-size: 15px; line-height: 20px; text-align: center; }
.add { margin: 4px auto 0 33px; } .sheetbar .dots { margin: 7px 15px 0 0; }
.hscroll { width: 728px; display: flex; margin-top: 4px; height: 19px; }

/* status bar */
.status { height: 27px; border-top: 1px solid #c0c0c0; background: #f1f1f1; display: flex; align-items: center; padding: 0 10px 0 7px; font-size: 12px; flex: none; gap: 22px; }
.views { margin-left: auto; display: flex; gap: 27px; margin-right: -2px; } .views svg { fill: none; stroke: #777; }
.zoom { display: flex; align-items: center; gap: 4px; color: #aaa; } .zoom span { margin-left: 10px; width: 25px; }
.zoom input { appearance: none; width: 125px; height: 7px; background: linear-gradient(#aaa, #aaa) center / 1px 7px no-repeat, linear-gradient(#aaa, #aaa) center / 100% 1px no-repeat; }
.zoom input::-webkit-slider-thumb { appearance: none; width: 1px; height: 1px; }

/* taskbar */
.taskbar { height: 50px; flex: none; display: flex; align-items: stretch; background: linear-gradient(90deg, #1f3226, #1c2e25 60%, #1d2f26 75%, #20382f 85%, #20382f); color: #fff; }
.taskbar button { color: #fff; }
.start { width: 60px; padding-left: 20px; }
.search { width: 360px; background: #f1f1f1; border: 1px solid #c4c4c4; display: flex; align-items: center; padding-left: 14px; gap: 13px; font-size: 18px; } .search input { width: 280px; } .search input::placeholder { color: #333; opacity: 1; }
.tview { width: 64px; display: flex; align-items: center; justify-content: center; padding-right: 4px; }
.apps { width: 951px; display: flex; } .apps button { flex: 1; display: flex; align-items: center; justify-content: center; }
.run { background: linear-gradient(#76b9ed, #76b9ed) center bottom / 42px 3px no-repeat; }
.two { background: linear-gradient(90deg, #76b9ed 31px, #567fa3 31px) center bottom / 42px 3px no-repeat; }
.apps text { font-family: "Open Sans", sans-serif; fill: #fff; font-weight: 700; } .w12t { font-size: 13px; } .w14t { font-size: 14px; } .w16t { font-size: 16px; } .w18t { font-size: 18px; } .apps .fz { font-size: 22px; font-style: italic; font-family: "Liberation Sans", sans-serif; } .apps .n64 { font-size: 9px; fill: #222; } .apps .n7 { font-size: 20px; font-family: "Liberation Serif", serif; }
.tray { margin-left: auto; display: flex; align-items: center; } .tray svg { fill: none; stroke: #fff; stroke-width: 1.3; } .tray text { fill: #fff; stroke: none; }
.weather { display: flex; align-items: center; gap: 12px; font-size: 17px; margin-right: 23px; } .n1 { font-size: 12px; } .n18 { font-size: 14px; font-weight: 600; }
.weather circle { stroke: none; }
.t30 { width: 30px; display: flex; justify-content: center; } .lang { width: 45px; padding-left: 12px; }
.clock { width: 92px; margin-left: 1px; text-align: center; line-height: 23px; white-space: nowrap; }
.notif { margin: 6px 13px 0 15px; } .peek { width: 6px; align-self: stretch; border-left: 1px solid #7c8a84; }

/* message box */
.dialog { position: absolute; left: 694px; top: 409px; width: 552px; background: #fff; border: 1px solid #666; box-shadow: 3px 6px 14px rgba(0, 0, 0, .4); color: #000; font-size: 13px; line-height: 19px; }
.dtitle { display: flex; justify-content: space-between; padding: 9px 14px 0 9px; height: 71px; align-items: flex-start; font-size: 14px; } .dtitle button { padding-top: 3px; }
.dbody { display: flex; gap: 11px; padding-left: 29px; height: 146px; }
.msg { white-space: nowrap; } .msg p { margin-bottom: 19px; } .msg .ind { padding-left: 12px; }
.qm { font-size: 25px; fill: #fff; font-weight: 400; }
.dfoot { background: #f0f0f0; height: 62px; display: flex; justify-content: flex-end; gap: 12px; padding: 16px 23px 0 0; } .dfoot button { width: 98px; height: 31px; background: #e1e1e1; border: 1px solid #adadad; } .dfoot .yes { background: #e5f1fb; border-color: #0078d7; }
```
